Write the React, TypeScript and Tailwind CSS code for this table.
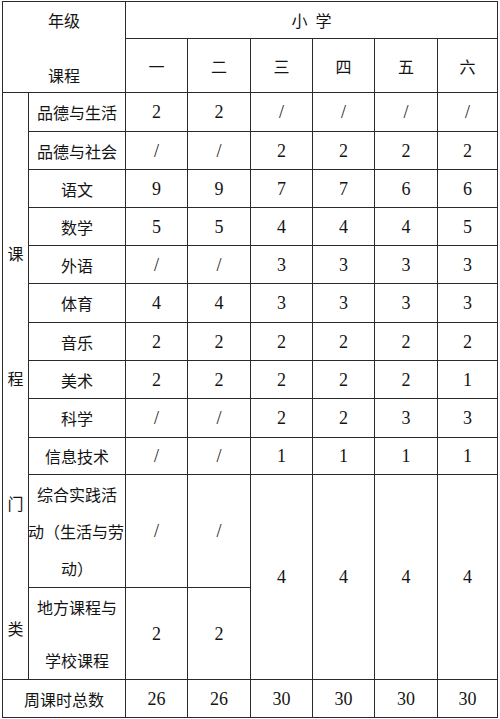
import React from "react";

const cjk = "font-['Noto_Sans_CJK_SC','Noto_Sans',sans-serif]";
const num = "font-['Liberation_Serif','DejaVu_Serif',serif]";

const rows: [string, string[]][] = [
  ["品德与生活", ["2", "2", "/", "/", "/", "/"]],
  ["品德与社会", ["/", "/", "2", "2", "2", "2"]],
  ["语文", ["9", "9", "7", "7", "6", "6"]],
  ["数学", ["5", "5", "4", "4", "4", "5"]],
  ["外语", ["/", "/", "3", "3", "3", "3"]],
  ["体育", ["4", "4", "3", "3", "3", "3"]],
  ["音乐", ["2", "2", "2", "2", "2", "2"]],
  ["美术", ["2", "2", "2", "2", "2", "1"]],
  ["科学", ["/", "/", "2", "2", "3", "3"]],
  ["信息技术", ["/", "/", "1", "1", "1", "1"]],
];

const grades = ["一", "二", "三", "四", "五", "六"];
const totals = ["26", "26", "30", "30", "30", "30"];

function Cell({ children, className = "" }: { children?: React.ReactNode; className?: string }) {
  return <div className={`bg-white flex items-center justify-center text-[#141414] ${className}`}>{children}</div>;
}

function Num({ v }: { v: string }) {
  return <Cell className={`${num} text-[18px] leading-none`}>{v}</Cell>;
}

export default function App() {
  return (
    <div className="bg-white w-[500px] h-[719px] pt-[1px] pl-[2px]">
      <div className="grid w-fit border border-[#2a2a2a] bg-[#2a2a2a] gap-px grid-cols-[25px_96px_61px_62px_61px_61px_62px_59px] grid-rows-[36px_53px_38px_37px_37px_37px_37px_38px_37px_37px_38px_36px_112px_91px_37px]">
        {/* header */}
        <div className={`bg-white col-span-2 row-span-2 flex flex-col items-center justify-between pt-[8px] pb-[7px] text-[16px] leading-[20px] text-[#141414] ${cjk}`}>
          <span>年级</span>
          <span>课程</span>
        </div>
        <Cell className={`col-span-6 text-[16px] ${cjk}`}>
          <span className="tracking-[8px] pl-[8px]">小学</span>
        </Cell>
        {grades.map((g) => (
          <Cell key={g} className={`text-[16px] ${cjk}`}>{g}</Cell>
        ))}

        {/* side label */}
        <div className={`bg-white row-span-12 flex flex-col items-center pt-[150px] gap-[105px] text-[16px] leading-[20px] text-[#141414] ${cjk}`}>
          <span>课</span>
          <span>程</span>
          <span>门</span>
          <span>类</span>
        </div>

        {rows.map(([name, vals]) => (
          <React.Fragment key={name}>
            <Cell className={`text-[16px] whitespace-nowrap ${cjk}`}>{name}</Cell>
            {vals.map((v, i) => (
              <Num key={i} v={v} />
            ))}
          </React.Fragment>
        ))}

        {/* 综合实践活动 */}
        <div className={`bg-white flex flex-col items-center justify-center text-[16px] leading-[37px] text-[#141414] whitespace-nowrap ${cjk}`}>
          <span>综合实践活</span>
          <span className="-ml-[2px]">动（生活与劳</span>
          <span>动）</span>
        </div>
        <Num v="/" />
        <Num v="/" />
        <Cell className={`row-span-2 ${num} text-[18px]`}>4</Cell>
        <Cell className={`row-span-2 ${num} text-[18px]`}>4</Cell>
        <Cell className={`row-span-2 ${num} text-[18px]`}>4</Cell>
        <Cell className={`row-span-2 ${num} text-[18px]`}>4</Cell>

        {/* 地方课程 */}
        <div className={`bg-white flex flex-col items-center justify-center text-[16px] leading-[53px] text-[#141414] whitespace-nowrap ${cjk}`}>
          <span>地方课程与</span>
          <span>学校课程</span>
        </div>
        <Num v="2" />
        <Num v="2" />

        {/* totals */}
        <Cell className={`col-span-2 text-[16px] ${cjk}`}>周课时总数</Cell>
        {totals.map((v, i) => (
          <Num key={i} v={v} />
        ))}
      </div>
    </div>
  );
}
